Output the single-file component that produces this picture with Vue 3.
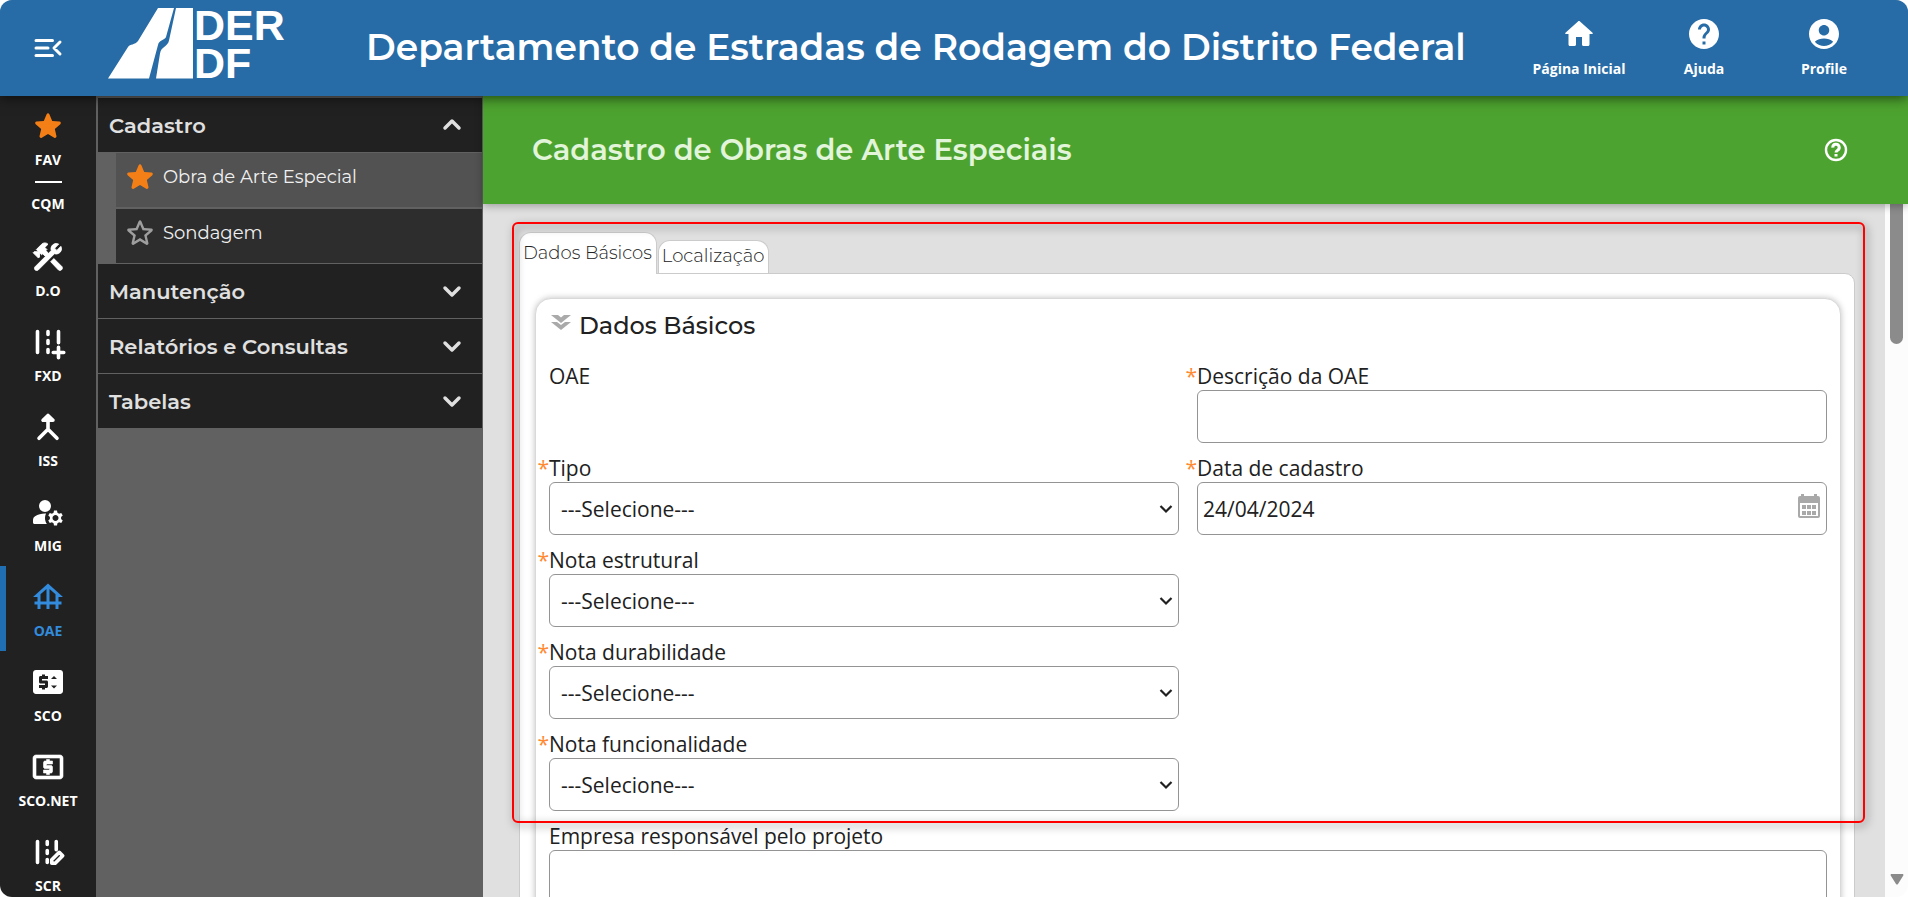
<template>
  <div class="shell">
    <header class="topbar">
      <button type="button" class="topbar__menu" aria-label="Recolher menu">
        <svg class="icon" viewBox="0 0 24 24" fill="none" stroke="currentColor" stroke-width="2" stroke-linecap="round" stroke-linejoin="round">
          <path d="M4 7h11M4 12h8M4 17h11M20 8l-4 4 4 4" />
        </svg>
      </button>
      <svg class="topbar__logo" viewBox="0 0 178 72" role="img" aria-label="DER DF">
        <path d="M50 1h16l-8 29c-1 3-7 3-8 8l-9 33.5H0l20-31.5c2-3 7-2 10-6z" fill="#fff" />
        <path d="M68 1h17v70.5H48l4-25c1-7 8-7 9-13z" fill="#fff" />
        <text x="86" y="33">DER</text>
        <text x="86" y="71">DF</text>
      </svg>
      <h1 class="topbar__title">Departamento de Estradas de Rodagem do Distrito Federal</h1>
      <nav class="topbar__nav">
        <a v-for="link in links" :key="link.label" href="#" class="topbar__link">
          <svg class="icon" viewBox="0 0 24 24" fill="currentColor"><path :d="link.icon" /></svg>
          <span>{{ link.label }}</span>
        </a>
      </nav>
    </header>

    <div class="body">
      <nav class="rail">
        <a href="#" class="rail__fav">
          <svg class="icon rail__star" viewBox="0 0 24 24" fill="currentColor"><path :d="starPath" /></svg>
          <span>FAV</span>
        </a>
        <hr class="rail__line" />
        <a href="#" class="rail__text">CQM</a>
        <a
          v-for="mod in modules"
          :key="mod.label"
          href="#"
          class="rail__item"
          :class="{ 'rail__item--active': mod.label === activeModule }"
          @click.prevent="activeModule = mod.label"
        >
          <svg class="icon" viewBox="0 0 24 24">
            <path v-if="mod.fill" :d="mod.fill" fill="currentColor" stroke="currentColor" :stroke-width="mod.edge || 0" stroke-linejoin="round" />
            <path v-if="mod.line" :d="mod.line" fill="none" stroke="currentColor" stroke-width="2.4" stroke-linecap="round" stroke-linejoin="round" />
          </svg>
          <span>{{ mod.label }}</span>
        </a>
      </nav>

      <aside class="menu">
        <div v-for="group in groups" :key="group.label" class="menu__group">
          <button type="button" class="menu__head" :aria-expanded="group.open" @click="group.open = !group.open">
            <span>{{ group.label }}</span>
            <svg class="menu__chevron" :class="{ 'menu__chevron--up': group.open }" viewBox="0 0 20 20" fill="none">
              <path d="M3 7l7 7 7-7" stroke="currentColor" stroke-width="3.5" stroke-linecap="round" stroke-linejoin="round" />
            </svg>
          </button>
          <div v-if="group.open && group.items.length" class="menu__list">
            <a
              v-for="item in group.items"
              :key="item.label"
              href="#"
              class="menu__item"
              :class="{ 'menu__item--active': item.fav }"
            >
              <svg class="icon" viewBox="0 0 24 24" fill="currentColor">
                <path :d="item.fav ? starPath : starOutlinePath" />
              </svg>
              <span>{{ item.label }}</span>
            </a>
          </div>
        </div>
      </aside>

      <main class="main">
        <div class="page-head">
          <h2>Cadastro de Obras de Arte Especiais</h2>
          <button type="button" class="page-head__help" aria-label="Ajuda da página">
            <svg viewBox="0 0 24 24" fill="none" stroke="currentColor" stroke-width="2.4">
              <circle cx="12" cy="12" r="10" />
              <path d="M8.8 9.6a3.2 3.2 0 1 1 4.8 2.6c-1.1.7-1.6 1.1-1.6 2.4M12 16v2.4" stroke-width="3" />
            </svg>
          </button>
        </div>

        <div class="scroll">
          <div class="content">
            <div class="tabs" role="tablist">
              <button
                v-for="tab in tabs"
                :key="tab"
                type="button"
                role="tab"
                class="tab"
                :class="{ 'tab--active': tab === activeTab }"
                :aria-selected="tab === activeTab"
                @click="activeTab = tab"
              >{{ tab }}</button>
            </div>

            <div class="panel">
              <section class="card">
                <h3 class="card__title">
                  <svg viewBox="0 0 20 16" fill="#aaa">
                    <path d="M0 0h7l3 2.5L13 0h7L10 8zM0 7h6l4 3 4-3h6l-10 8z" />
                  </svg>
                  Dados Básicos
                </h3>

                <form class="form" @submit.prevent>
                  <div
                    v-for="field in fields"
                    :key="field.id"
                    class="field"
                    :class="{ 'field--first': field.first, 'field--wide': field.wide }"
                  >
                    <span v-if="field.type === 'none'" class="field__label">{{ field.label }}</span>
                    <label v-else class="field__label" :for="field.id">
                      <span v-if="field.required" class="field__star">*</span>{{ field.label }}
                    </label>

                    <div v-if="field.type === 'select'" class="field__box">
                      <select :id="field.id" v-model="field.value" class="control control--select">
                        <option value="">---Selecione---</option>
                      </select>
                      <svg class="field__arrow" viewBox="0 0 14 10" fill="none">
                        <path d="M1.5 2L7 7.5 12.5 2" stroke="currentColor" stroke-width="2.2" />
                      </svg>
                    </div>
                    <div v-else-if="field.type !== 'none'" class="field__box">
                      <input :id="field.id" v-model="field.value" type="text" class="control" />
                      <button v-if="field.type === 'date'" type="button" class="field__calendar" aria-label="Abrir calendário">
                        <svg viewBox="0 0 24 26" fill="#a9a9a9">
                          <path
                            fill-rule="evenodd"
                            d="M4 1h3v2h10V1h3v2h1a2 2 0 0 1 2 2v18a2 2 0 0 1-2 2H3a2 2 0 0 1-2-2V5a2 2 0 0 1 2-2h1zM3 10v13h18V10zM5 12h4v4H5zM10 12h4v4h-4zM15 12h4v4h-4zM5 18h4v4H5zM10 18h4v4h-4zM15 18h4v4h-4z"
                          />
                        </svg>
                      </button>
                    </div>
                  </div>
                </form>
              </section>
            </div>

            <div class="highlight" />
          </div>

          <div class="scrollbar">
            <span class="scrollbar__thumb" />
            <svg class="scrollbar__arrow" viewBox="0 0 14 12" fill="#8b8b8b"><path d="M1 0h12q1 1 0 2L8 10q-1 1-2 0L1 2q-1-1 0-2z" /></svg>
          </div>
        </div>
      </main>
    </div>
  </div>
</template>

<script setup>
import { ref, reactive } from 'vue';

const starPath = 'M12 17.27l4.15 2.51c.76.46 1.69-.22 1.49-1.08l-1.1-4.72 3.67-3.18c.67-.58.31-1.68-.57-1.75l-4.83-.41-1.89-4.46c-.34-.81-1.5-.81-1.84 0L9.19 8.63l-4.83.41c-.88.07-1.24 1.17-.57 1.75l3.67 3.18-1.1 4.72c-.2.86.73 1.54 1.49 1.08z';
const starOutlinePath = 'M19.65 9.04l-4.84-.42-1.89-4.45c-.34-.81-1.5-.81-1.84 0L9.19 8.63l-4.83.41c-.88.07-1.24 1.17-.57 1.75l3.67 3.18-1.1 4.72c-.2.86.73 1.54 1.49 1.08l4.15-2.5 4.15 2.51c.76.46 1.69-.22 1.49-1.08l-1.1-4.73 3.67-3.18c.67-.58.32-1.68-.56-1.75zM12 15.4l-3.76 2.27 1-4.28-3.32-2.88 4.38-.38L12 6.1l1.71 4.04 4.38.38-3.32 2.88 1 4.28L12 15.4z';

const links = [
  { label: 'Página Inicial', icon: 'M10 19v-5h4v5c0 .55.45 1 1 1h3c.55 0 1-.45 1-1v-7h1.7c.46 0 .68-.57.33-.87L12.67 3.6c-.38-.34-.96-.34-1.34 0l-8.36 7.53c-.34.3-.13.87.33.87H5v7c0 .55.45 1 1 1h3c.55 0 1-.45 1-1z' },
  { label: 'Ajuda', icon: 'M12 2C6.48 2 2 6.48 2 12s4.48 10 10 10 10-4.48 10-10S17.52 2 12 2zm1 17h-2v-2h2v2zm2.07-7.75l-.9.92C13.45 12.9 13 13.5 13 15h-2v-.5c0-1.1.45-2.1 1.17-2.83l1.24-1.26c.37-.36.59-.86.59-1.41 0-1.1-.9-2-2-2s-2 .9-2 2H8c0-2.21 1.79-4 4-4s4 1.79 4 4c0 .88-.36 1.68-.93 2.25z' },
  { label: 'Profile', icon: 'M12 2C6.48 2 2 6.48 2 12s4.48 10 10 10 10-4.48 10-10S17.52 2 12 2zm0 4c1.93 0 3.5 1.57 3.5 3.5S13.93 13 12 13s-3.5-1.57-3.5-3.5S10.07 6 12 6zm0 14c-2.03 0-4.43-.82-6.14-2.88C7.55 15.8 9.68 15 12 15s4.45.8 6.14 2.12C16.43 19.18 14.03 20 12 20z' },
];

const activeModule = ref('OAE');
const modules = [
  {
    label: 'D.O',
    edge: 0.6,
    fill: 'M13.78 15.17l2.12-2.12 5.5 5.5q.5 1.5-.5 2.1-1 .6-1.9 0zM17.5 10c1.93 0 3.5-1.57 3.5-3.5 0-.58-.16-1.12-.41-1.6l-2.7 2.7-1.49-1.49 2.7-2.7c-.48-.25-1.02-.41-1.6-.41C15.57 3 14 4.57 14 6.5c0 .41.08.8.21 1.16l-1.85 1.85-1.78-1.78.71-.71-1.41-1.41L12 3.49c-1.17-1.17-3.07-1.17-4.24 0L4.22 7.03l1.41 1.41H2.81l-.71.71 3.54 3.54.71-.71V9.15l1.41 1.41.71-.71 1.78 1.78-7 7q-.6 1.3.2 2 .8.7 2 .1L16.34 9.79c.36.13.75.21 1.16.21z',
  },
  { label: 'FXD', line: 'M5 5v14M12 5v2M12 11v2M12 17v2M19 5v7.5M19 15.5v7M15.5 19h7' },
  { label: 'ISS', line: 'M12 5v8.5L6 19.5M12 13.5l6 6M12 4.3L8.7 7.5h6.6z' },
  {
    label: 'MIG',
    fill: 'M14 8a4 4 0 1 1-8 0a4 4 0 1 1 8 0zM10.67 13.02C10.45 13.01 10.23 13 10 13c-2.42 0-4.68.67-6.61 1.82C2.51 15.34 2 16.32 2 17.35V19c0 .55.45 1 1 1h8.26c-.79-1.13-1.26-2.51-1.26-4 0-1.07.25-2.07.67-2.98zM20.75 16c0-.22-.03-.42-.06-.63l1.14-1.01-1-1.73-1.45.49c-.32-.27-.68-.48-1.08-.63L18 11h-2l-.3 1.49c-.4.15-.76.36-1.08.63l-1.45-.49-1 1.73 1.14 1.01c-.03.21-.06.41-.06.63s.03.42.06.63l-1.14 1.01 1 1.73 1.45-.49c.32.27.68.48 1.08.63L16 21h2l.3-1.49c.4-.15.76-.36 1.08-.63l1.45.49 1-1.73-1.14-1.01c.03-.21.06-.41.06-.63zM17 18c-1.1 0-2-.9-2-2s.9-2 2-2 2 .9 2 2-.9 2-2 2z',
  },
  {
    label: 'OAE',
    fill: 'M19 12h3L12 3 2 12h3v3H3v2h2v3h2v-3h4v3h2v-3h4v3h2v-3h2v-2h-2v-3zM7 15v-4.81l4-3.6V15H7zm6 0V6.59l4 3.6V15h-4z',
  },
  {
    label: 'SCO',
    fill: 'M20 4H4c-1.11 0-1.99.89-1.99 2L2 18c0 1.11.89 2 2 2h16c1.11 0 2-.89 2-2V6c0-1.11-.89-2-2-2zM12 10H8v1h3c.55 0 1 .45 1 1v3c0 .55-.45 1-1 1h-1v1H8v-1H6v-2h4v-1H7c-.55 0-1-.45-1-1V9c0-.55.45-1 1-1h1V7h2v1h2v2zm4 6.25l-2-2h4l-2 2zM14 10l2-2 2 2h-4z',
  },
  {
    label: 'SCO.NET',
    edge: 0.4,
    fill: 'M11 17h2v-1h1c.55 0 1-.45 1-1v-3c0-.55-.45-1-1-1h-3v-1h4V8h-2V7h-2v1h-1c-.55 0-1 .45-1 1v3c0 .55.45 1 1 1h3v1H9v2h2v1zm9-13H4c-1.11 0-1.99.89-1.99 2L2 18c0 1.11.89 2 2 2h16c1.11 0 2-.89 2-2V6c0-1.11-.89-2-2-2zm0 14H4V6h16v12z',
  },
  { label: 'SCR', line: 'M5 5v14M11.5 5v2M11.5 11v2M11.5 17v2M17.5 5v5.5M14.5 19.5v-2.3l5-5 2.3 2.3-5 5z' },
];

const groups = reactive([
  {
    label: 'Cadastro',
    open: true,
    items: [
      { label: 'Obra de Arte Especial', fav: true },
      { label: 'Sondagem', fav: false },
    ],
  },
  { label: 'Manutenção', open: false, items: [] },
  { label: 'Relatórios e Consultas', open: false, items: [] },
  { label: 'Tabelas', open: false, items: [] },
]);

const tabs = ['Dados Básicos', 'Localização'];
const activeTab = ref('Dados Básicos');

const fields = reactive([
  { id: 'oae', label: 'OAE', type: 'none' },
  { id: 'descricao', label: 'Descrição da OAE', type: 'text', value: '', required: true },
  { id: 'tipo', label: 'Tipo', type: 'select', value: '', required: true },
  { id: 'data', label: 'Data de cadastro', type: 'date', value: '24/04/2024', required: true },
  { id: 'estrutural', label: 'Nota estrutural', type: 'select', value: '', required: true, first: true },
  { id: 'durabilidade', label: 'Nota durabilidade', type: 'select', value: '', required: true, first: true },
  { id: 'funcionalidade', label: 'Nota funcionalidade', type: 'select', value: '', required: true, first: true },
  { id: 'empresa', label: 'Empresa responsável pelo projeto', type: 'text', value: '', wide: true },
]);
</script>

<style>
body {
  margin: 0;
  background: #fff;
}
</style>

<style scoped>
.shell,
.shell * {
  box-sizing: border-box;
}

.shell {
  display: flex;
  flex-direction: column;
  height: 100vh;
  overflow: hidden;
  border-radius: 12px;
  font-family: 'Open Sans', 'Noto Sans', sans-serif;
  color: #212121;
}

a {
  color: inherit;
  text-decoration: none;
}

button {
  padding: 0;
  border: none;
  background: none;
  color: inherit;
  cursor: pointer;
}

h1,
h2,
h3 {
  margin: 0;
  font-family: Montserrat, Inter, sans-serif;
}

.icon {
  display: block;
  width: 36px;
  height: 36px;
  flex-shrink: 0;
}

/* ── Top bar ── */
.topbar {
  position: relative;
  z-index: 3;
  display: flex;
  align-items: center;
  flex-shrink: 0;
  height: 96px;
  padding-right: 25px;
  background: #276ca6;
  color: #fff;
  box-shadow: 0 2px 12px rgba(0, 0, 0, 0.6);
}

.topbar__menu {
  display: flex;
  justify-content: center;
  width: 96px;
}

.topbar__logo {
  width: 178px;
  height: 72px;
  margin: 0 80px 10px 12px;
  flex-shrink: 0;
  overflow: visible;
}

.topbar__logo text {
  font-family: 'Liberation Sans', Arial, sans-serif;
  font-size: 43px;
  font-weight: 700;
  fill: #fff;
}

.topbar__title {
  flex: 1;
  padding-bottom: 2px;
  font-size: 36px;
  font-weight: 600;
  line-height: 48px;
  white-space: nowrap;
}

.topbar__nav {
  display: grid;
  grid-template-columns: 128px 122px 118px;
}

.topbar__link {
  display: flex;
  flex-direction: column;
  align-items: center;
  gap: 8px;
  padding-bottom: 2px;
  font-size: 14px;
  font-weight: 700;
  line-height: 18px;
}

.body {
  display: flex;
  flex: 1;
  min-height: 0;
}

/* ── Module rail ── */
.rail {
  display: flex;
  flex-direction: column;
  align-items: center;
  width: 96px;
  flex-shrink: 0;
  overflow: hidden;
  background: #212121;
  color: #fff;
  font-size: 14px;
  font-weight: 700;
  line-height: 18px;
}

.rail__fav,
.rail__item {
  display: flex;
  flex-direction: column;
  align-items: center;
  gap: 7px;
  flex-shrink: 0;
}

.rail__fav {
  padding-top: 12px;
}

.rail__star {
  color: #f57f17;
}

.rail__line {
  width: 27px;
  height: 2px;
  margin: 12px 0;
  border: none;
  flex-shrink: 0;
  background: #fff;
}

.rail__text {
  margin-bottom: 13px;
}

.rail__item {
  width: 100%;
  height: 85px;
  padding-top: 13px;
  border: solid transparent;
  border-width: 0 6px;
}

.rail__item--active {
  border-left-color: #1f6fb2;
  color: #328bdc;
}

/* ── Side menu ── */
.menu {
  display: flex;
  flex-direction: column;
  gap: 1px;
  width: 387px;
  flex-shrink: 0;
  padding: 2px 1px 0 2px;
  background: #616161;
  color: #e0e0e0;
  font-family: Montserrat, Inter, sans-serif;
}

.menu__group {
  display: flex;
  flex-direction: column;
  gap: 1px;
}

.menu__head {
  display: flex;
  align-items: center;
  justify-content: space-between;
  height: 54px;
  padding: 0 20px 0 11px;
  background: #212121;
  font-family: inherit;
  font-size: 21px;
  font-weight: 600;
}

.menu__chevron {
  width: 20px;
  height: 20px;
}

.menu__chevron--up {
  transform: rotate(180deg);
}

.menu__list {
  display: flex;
  flex-direction: column;
  gap: 2px;
  padding-left: 18px;
}

.menu__item {
  display: flex;
  align-items: center;
  gap: 5px;
  height: 54px;
  padding: 0 6px 6px;
  background: #2d2d2d;
  color: #f0f0f0;
  font-size: 18px;
  font-weight: 400;
}

.menu__item .icon {
  color: #9e9e9e;
}

.menu__item--active {
  background: #525252;
}

.menu__item--active .icon {
  color: #f57f17;
}

/* ── Page ── */
.main {
  display: flex;
  flex-direction: column;
  flex: 1;
  min-width: 0;
}

.page-head {
  position: relative;
  z-index: 2;
  display: flex;
  align-items: center;
  justify-content: space-between;
  flex-shrink: 0;
  height: 108px;
  padding: 0 60px 0 49px;
  background: #4da32f;
  color: #e2f4da;
  box-shadow: 0 2px 8px rgba(0, 0, 0, 0.3);
}

.page-head h2 {
  padding-bottom: 2px;
  font-size: 29px;
  font-weight: 600;
}

.page-head__help {
  color: #fff;
}

.page-head__help svg {
  display: block;
  width: 24px;
  height: 24px;
}

.scroll {
  display: flex;
  flex: 1;
  min-height: 0;
}

.content {
  position: relative;
  flex: 1;
  min-width: 0;
  overflow: hidden;
  padding: 28px 30px 0 36px;
  background: #e0e0e0;
}

/* ── Tabs ── */
.tabs {
  display: flex;
  align-items: flex-end;
  gap: 1px;
  height: 42px;
}

.tab {
  position: relative;
  z-index: 1;
  height: 33px;
  padding: 0 4px 2px 3px;
  border: 1px solid #cbcbcb;
  border-bottom: none;
  border-radius: 12px 12px 0 0;
  background: #fff;
  color: #212121;
  font-family: Montserrat, Inter, sans-serif;
  font-size: 18px;
  font-weight: 300;
}

.tab--active {
  height: 42px;
}

.tab:not(.tab--active) {
  margin-bottom: 1px;
}

/* ── Panel ── */
.panel {
  margin-top: -1px;
  padding: 24px 13px 40px 15px;
  border: 1px solid #cbcbcb;
  border-radius: 0 10px 0 0;
  background: #fff;
}

.card {
  padding: 14px 13px 24px;
  border: 1px solid #d9d9d9;
  border-radius: 16px;
  background: #fff;
  box-shadow: 0 0 6px rgba(0, 0, 0, 0.25);
}

.card__title {
  display: flex;
  align-items: center;
  gap: 8px;
  height: 25px;
  padding-left: 2px;
  font-size: 24px;
  font-weight: 500;
}

.card__title svg {
  width: 20px;
  height: 16px;
  margin-bottom: 6px;
}

/* ── Form ── */
.form {
  display: grid;
  grid-template-columns: 1fr 1fr;
  gap: 12px 18px;
  margin-top: 25px;
}

.field--first {
  grid-column: 1;
}

.field--wide {
  grid-column: 1 / -1;
}

.field__label {
  position: relative;
  display: block;
  height: 27px;
  font-size: 21px;
  line-height: 27px;
}

.field__star {
  position: absolute;
  right: 100%;
  color: #ff8a33;
}

.field__box {
  position: relative;
}

.control {
  display: block;
  width: 100%;
  height: 53px;
  padding: 0 5px;
  border: 1px solid #949494;
  border-radius: 6px;
  background: #fff;
  color: #212121;
  font-family: inherit;
  font-size: 21px;
}

.control--select {
  padding: 0 30px 0 11px;
  appearance: none;
}

.field__arrow {
  position: absolute;
  top: 22px;
  right: 6px;
  width: 14px;
  height: 10px;
  pointer-events: none;
}

.field__calendar {
  position: absolute;
  top: 11px;
  right: 6px;
}

.field__calendar svg {
  display: block;
  width: 24px;
  height: 26px;
}

/* Red frame laid over the required fields */
.highlight {
  position: absolute;
  top: 18px;
  right: 20px;
  left: 29px;
  height: 601px;
  border: 2px solid #f00;
  border-radius: 6px;
  filter: drop-shadow(2px 3px 4px rgba(0, 0, 0, 0.55));
  pointer-events: none;
  z-index: 2;
}

/* ── Scrollbar ── */
.scrollbar {
  display: flex;
  flex-direction: column;
  align-items: center;
  justify-content: space-between;
  width: 23px;
  flex-shrink: 0;
  padding: 0 5px 11px;
  background: #fcfcfc;
}

.scrollbar__thumb {
  width: 13px;
  height: 140px;
  border-radius: 0 0 7px 7px;
  background: #8b8b8b;
}

.scrollbar__arrow {
  width: 14px;
  height: 12px;
}
</style>
